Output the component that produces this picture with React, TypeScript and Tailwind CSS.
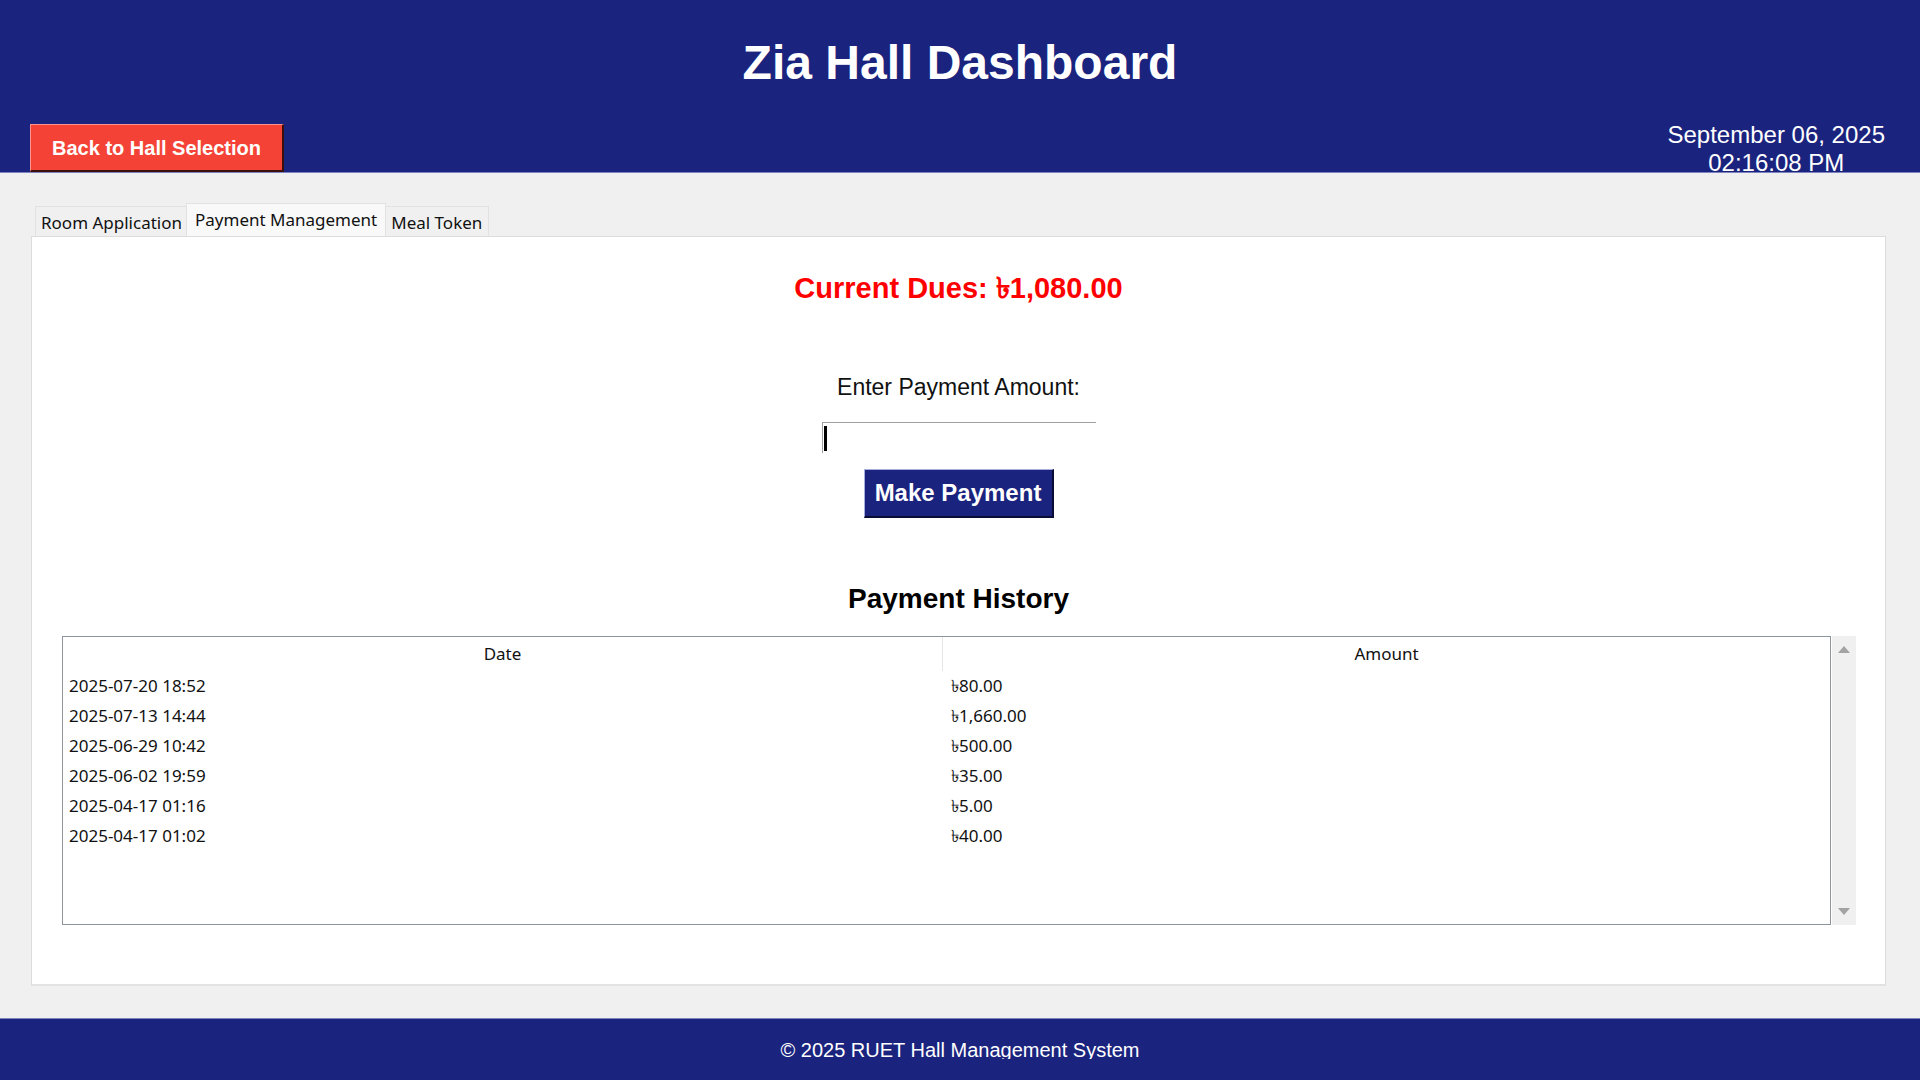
import React from 'react';

const payments = [
  { date: '2025-07-20 18:52', amount: '৳80.00' },
  { date: '2025-07-13 14:44', amount: '৳1,660.00' },
  { date: '2025-06-29 10:42', amount: '৳500.00' },
  { date: '2025-06-02 19:59', amount: '৳35.00' },
  { date: '2025-04-17 01:16', amount: '৳5.00' },
  { date: '2025-04-17 01:02', amount: '৳40.00' },
];

const arial = "font-['Liberation_Sans',Arial,sans-serif]";
const ui = "font-['Noto_Sans','Open_Sans',sans-serif]";

const Header = () => (
  <header className={`h-[173px] shrink-0 overflow-hidden border-b border-[#7c83bf] bg-[#1a237e] ${arial}`}>
    <h1 className="pt-[39px] text-center text-[48px] font-bold leading-none text-white">Zia Hall Dashboard</h1>
    <div className="mt-[37px] flex items-start justify-between pl-[30px] pr-[35px]">
      <button className="h-[48px] w-[254px] border-t border-l border-r-2 border-b-2 border-t-[#f9958e] border-l-[#f9958e] border-r-[#3b0f0c] border-b-[#3b0f0c] bg-[#f44336] text-[20px] font-bold leading-none text-white">
        Back to Hall Selection
      </button>
      <div className="-mt-[3px] text-center text-[24px] leading-[28px] text-white">
        <div>September 06, 2025</div>
        <div>02:16:08 PM</div>
      </div>
    </div>
  </header>
);

const Tabs = () => (
  <div className={`flex h-[33px] items-end pl-[35px] text-[17px] text-[#111] ${ui}`}>
    <div className="flex h-[30px] items-center border border-b-0 border-[#e2e2e2] bg-[#f0f0f0] px-[5px] pt-[2px]">Room Application</div>
    <div className="relative z-10 -mx-[2px] flex h-[33px] items-start border border-b-0 border-[#e2e2e2] bg-[#f9f9f9] px-[8px] pt-[3px]">
      Payment Management
    </div>
    <div className="flex h-[30px] items-center border border-b-0 border-[#e2e2e2] bg-[#f0f0f0] px-[6px] pt-[2px]">Meal Token</div>
  </div>
);

const HistoryTable = () => (
  <div className="ml-[30px] mr-[29px] flex h-[289px]">
    <div className={`flex-1 border border-[#8e949c] bg-white text-[17px] text-[#111] ${ui}`}>
      <div className="grid h-[34px] grid-cols-[880px_1fr]">
        <div className="flex items-center justify-center border-r border-[#e5e5e5]">Date</div>
        <div className="flex items-center justify-center">Amount</div>
      </div>
      {payments.map((p) => (
        <div key={p.date} className="grid h-[30px] grid-cols-[880px_1fr] items-center">
          <div className="pl-[6px]">{p.date}</div>
          <div className="pl-[8px]">{p.amount}</div>
        </div>
      ))}
    </div>
    <div className="ml-[1px] flex w-[24px] flex-col items-center justify-between bg-[#f0f0f0] py-[10px]">
      <svg width="12" height="7" viewBox="0 0 12 7"><polygon points="6,0 12,7 0,7" fill="#a3a3a3" /></svg>
      <svg width="12" height="7" viewBox="0 0 12 7"><polygon points="0,0 12,0 6,7" fill="#a3a3a3" /></svg>
    </div>
  </div>
);

const PaymentPanel = () => (
  <div className={`ml-[31px] mr-[34px] h-[750px] border border-[#dcdcdc] border-b-2 border-b-[#e2e2e2] bg-white ${arial}`}>
    <div className="flex flex-col items-center">
      <div className="mt-[37px] text-[29px] font-bold leading-none text-[#ff0000]">Current Dues: ৳1,080.00</div>
      <div className="mt-[73px] text-[23px] leading-none text-[#111]">Enter Payment Amount:</div>
      <div className="mt-[23px] flex h-[31px] w-[274px] items-center border-t border-l border-[#a0a0a0] pl-[1px]">
        <div className="h-[25px] w-[3px] bg-black" />
      </div>
      <button className="mt-[16px] h-[49px] w-[190px] border-t border-l border-r-2 border-b-2 border-t-[#a8aedb] border-l-[#a8aedb] border-r-[#0a0d33] border-b-[#0a0d33] bg-[#1a237e] text-[24px] font-bold leading-none text-white">
        Make Payment
      </button>
      <div className="mt-[67px] text-[28px] font-bold leading-none text-black">Payment History</div>
    </div>
    <div className="mt-[23px]">
      <HistoryTable />
    </div>
  </div>
);

export default function App() {
  return (
    <div className="flex h-[1080px] w-[1920px] flex-col overflow-hidden bg-[#f0f0f0]">
      <Header />
      <main className="flex-1 pt-[30px]">
        <Tabs />
        <PaymentPanel />
      </main>
      <footer className={`h-[62px] shrink-0 border-t border-[#7c83bf] bg-[#1a237e] pt-[20px] ${arial}`}>
        <div className="h-[20px] overflow-hidden text-center text-[20px] leading-[23px] text-white">
          © 2025 RUET Hall Management System
        </div>
      </footer>
    </div>
  );
}
